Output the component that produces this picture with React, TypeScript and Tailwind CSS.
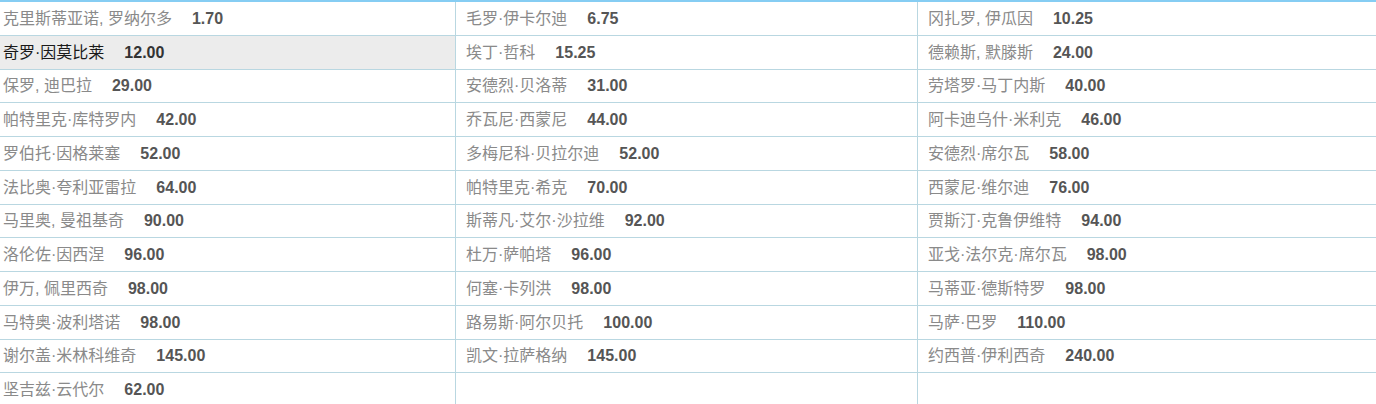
import React from 'react';

type Cell = { name: string; odds: string } | null;

const rows: Cell[][] = [
  [{ name: '克里斯蒂亚诺, 罗纳尔多', odds: '1.70' }, { name: '毛罗·伊卡尔迪', odds: '6.75' }, { name: '冈扎罗, 伊瓜因', odds: '10.25' }],
  [{ name: '奇罗·因莫比莱', odds: '12.00' }, { name: '埃丁·哲科', odds: '15.25' }, { name: '德赖斯, 默滕斯', odds: '24.00' }],
  [{ name: '保罗, 迪巴拉', odds: '29.00' }, { name: '安德烈·贝洛蒂', odds: '31.00' }, { name: '劳塔罗·马丁内斯', odds: '40.00' }],
  [{ name: '帕特里克·库特罗内', odds: '42.00' }, { name: '乔瓦尼·西蒙尼', odds: '44.00' }, { name: '阿卡迪乌什·米利克', odds: '46.00' }],
  [{ name: '罗伯托·因格莱塞', odds: '52.00' }, { name: '多梅尼科·贝拉尔迪', odds: '52.00' }, { name: '安德烈·席尔瓦', odds: '58.00' }],
  [{ name: '法比奥·夸利亚雷拉', odds: '64.00' }, { name: '帕特里克·希克', odds: '70.00' }, { name: '西蒙尼·维尔迪', odds: '76.00' }],
  [{ name: '马里奥, 曼祖基奇', odds: '90.00' }, { name: '斯蒂凡·艾尔·沙拉维', odds: '92.00' }, { name: '贾斯汀·克鲁伊维特', odds: '94.00' }],
  [{ name: '洛伦佐·因西涅', odds: '96.00' }, { name: '杜万·萨帕塔', odds: '96.00' }, { name: '亚戈·法尔克·席尔瓦', odds: '98.00' }],
  [{ name: '伊万, 佩里西奇', odds: '98.00' }, { name: '何塞·卡列洪', odds: '98.00' }, { name: '马蒂亚·德斯特罗', odds: '98.00' }],
  [{ name: '马特奥·波利塔诺', odds: '98.00' }, { name: '路易斯·阿尔贝托', odds: '100.00' }, { name: '马萨·巴罗', odds: '110.00' }],
  [{ name: '谢尔盖·米林科维奇', odds: '145.00' }, { name: '凯文·拉萨格纳', odds: '145.00' }, { name: '约西普·伊利西奇', odds: '240.00' }],
  [{ name: '坚吉兹·云代尔', odds: '62.00' }, null, null],
];

function OddsCell({ cell, col, active }: { cell: Cell; col: number; active: boolean }) {
  const pad = col === 0 ? 'pl-[3px]' : 'pl-[10px]';
  const border = col < 2 ? 'border-r border-[#b9d7e1]' : '';
  return (
    <div
      className={`h-[33.75px] flex items-center pt-px border-b border-[#b9d7e1] ${border} ${pad} ${
        active ? 'bg-[#ececec]' : 'bg-white'
      }`}
    >
      {cell && (
        <>
          <span
            className={`text-[16px] ${active ? 'text-[#1a1a1a]' : 'text-[#8a8a8a]'}`}
            style={{ fontFamily: '"Liberation Sans", "Noto Sans CJK SC", sans-serif' }}
          >
            {cell.name}
          </span>
          <span
            className={`ml-[20px] text-[16px] font-bold ${active ? 'text-[#333]' : 'text-[#555]'}`}
            style={{ fontFamily: '"Liberation Sans", Arial, sans-serif' }}
          >
            {cell.odds}
          </span>
        </>
      )}
    </div>
  );
}

export default function App() {
  return (
    <div className="w-[1376px] h-[404px] overflow-hidden bg-white border-t-2 border-[#86cdf3]">
      <div className="grid grid-cols-[456px_462px_1fr]">
        {rows.map((row, r) =>
          row.map((cell, c) => (
            <OddsCell key={`${r}-${c}`} cell={cell} col={c} active={r === 1 && c === 0} />
          ))
        )}
      </div>
    </div>
  );
}
